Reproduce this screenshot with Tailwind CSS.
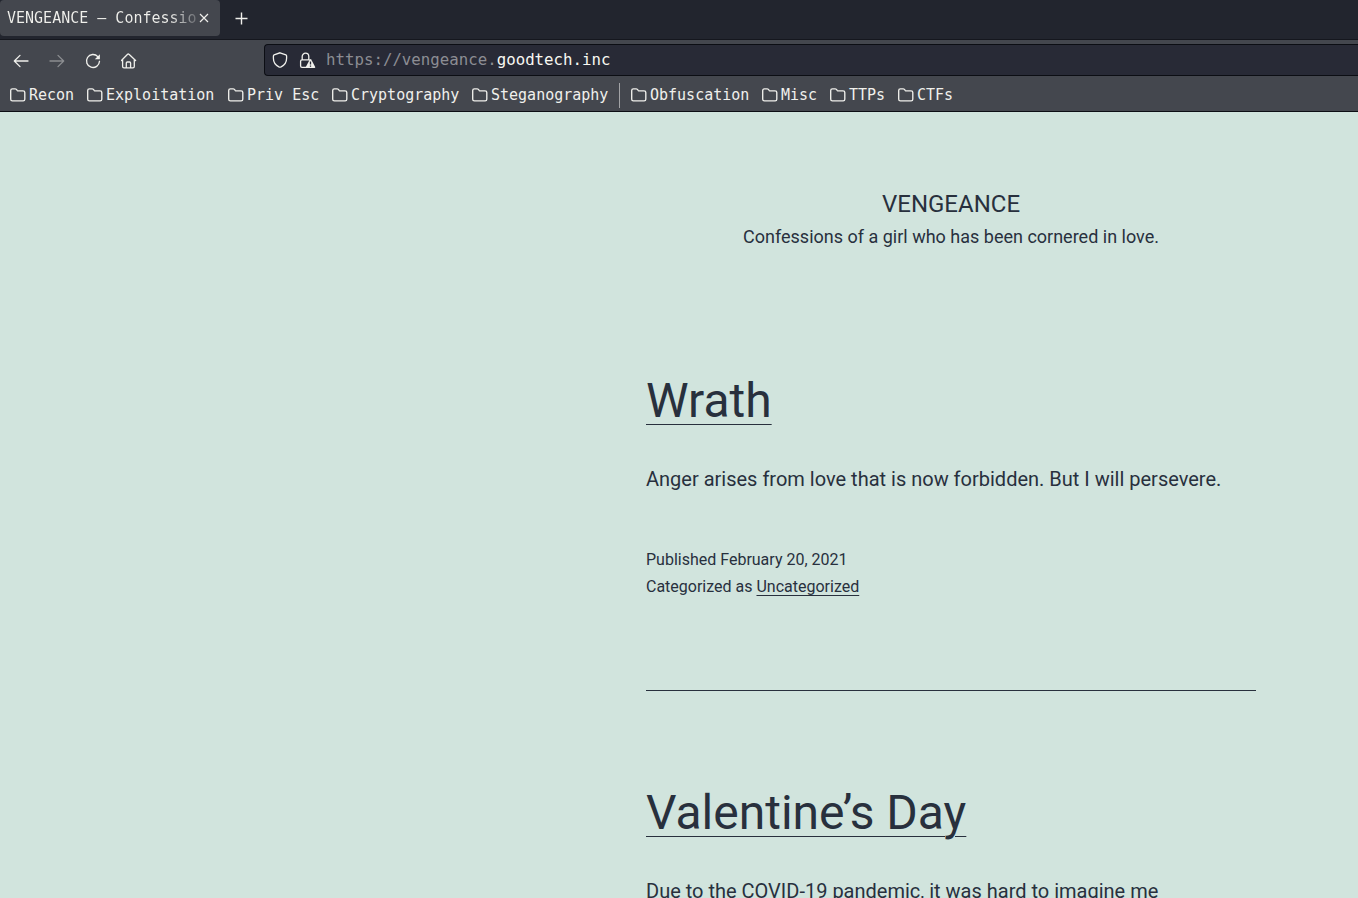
<!DOCTYPE html>
<html lang="en">
<head>
<meta charset="utf-8">
<title>VENGEANCE – Confessions</title>
<script src="https://cdn.jsdelivr.net/npm/@tailwindcss/browser@4"></script>
</head>
<body class="h-[898px] w-[1358px] overflow-hidden bg-[#d1e4dd] font-['Roboto',sans-serif] text-[#28303d]">
<svg class="hidden">
  <symbol id="folder" viewBox="0 0 16 14"><path d="M.7 11.2V2.5Q.7.8 2.4.8h2.7q.8 0 1.3.6l.8 1q.4.4 1.1.4h4.8q1.7 0 1.7 1.6v6.8q0 1.6-1.7 1.6H2.4Q.7 12.8.7 11.2z" fill="none" stroke="#f0f0ec" stroke-width="1.35"/></symbol>
</svg>
<header class="flex h-[112px] flex-col border-b border-[#0c0e14] bg-[#44474e] font-['DejaVu_Sans_Mono',monospace] text-[15px] text-[#f0f0ec]">
  <div class="flex h-10 shrink-0 items-start border-b border-[#15171e] bg-[#22252e]">
    <div class="flex h-9 w-[220px] items-center rounded bg-[#44474e] pl-[7px]">
      <span class="w-[189px] overflow-hidden whitespace-pre bg-linear-to-r from-[#f0f0ec] from-86% to-[#44474e] to-105% bg-clip-text pt-px text-transparent">VENGEANCE – Confessio</span>
      <svg class="ml-[3px]" width="10" height="10" viewBox="0 0 10 10"><path d="M1 1l8 8M9 1L1 9" stroke="#f0f0ec" stroke-width="1.15"/></svg>
    </div>
    <svg class="mt-3 ml-[15px]" width="13" height="13" viewBox="0 0 13 13"><path d="M6.5.5v12M.5 6.5h12" stroke="#f0f0ec" stroke-width="1.4"/></svg>
  </div>
  <div class="flex h-10 shrink-0 items-center">
    <div class="flex w-[264px] items-center gap-5 pt-px pl-[13px]">
      <svg width="16" height="16" viewBox="0 0 16 16"><path d="M15 8H1.5M7 2.4L1.3 8 7 13.6" fill="none" stroke="#f0f0ec" stroke-width="1.3" stroke-linecap="round" stroke-linejoin="round"/></svg>
      <svg width="16" height="16" viewBox="0 0 16 16"><path d="M1 8h13.5M9 2.4L14.7 8 9 13.6" fill="none" stroke="#8b8d90" stroke-width="1.3" stroke-linecap="round" stroke-linejoin="round"/></svg>
      <svg width="16" height="16" viewBox="0 0 16 16"><path d="M12.8 3.6A6.5 6.5 0 1 0 14.5 8.3" fill="none" stroke="#f0f0ec" stroke-width="1.35" stroke-linecap="round"/><path d="M14.9 1.3v4.5q0 .5-.5.5H9.8z" fill="#f0f0ec"/></svg>
      <svg width="16" height="16" viewBox="0.4 0 16 16"><path d="M.8 7.5L7 1.3q.7-.7 1.4 0L15 7.5M2 6.8v6.6q0 1.4 1.4 1.4h8.9q1.4 0 1.4-1.4V6.8M5.7 14.6V10q0-1 1-1H9q1 0 1 1v4.6" fill="none" stroke="#f0f0ec" stroke-width="1.3" stroke-linecap="round"/></svg>
    </div>
    <div class="flex h-8 flex-1 items-center rounded-l border border-r-0 border-[#0c0e14] bg-[#282a36] pl-[7px]">
      <svg width="16" height="16" viewBox="0 0 16 16"><path d="M8 .8l5.9 2.1q.7.3.7 1v2.3q0 5.8-5.5 8.7-1.1.5-2.2 0-5.5-2.9-5.5-8.7V3.9q0-.7.7-1z" fill="none" stroke="#f0f0ec" stroke-width="1.3"/></svg>
      <svg class="ml-[11px]" width="17" height="17" viewBox="0 0 17 17"><path d="M8 15.4H3q-1.4 0-1.4-1.4V9.2Q1.6 7.8 3 7.8h7q1 0 1 1M3.2 7.7V4.5a3.3 3.3 0 0 1 6.6 0v3.2" fill="none" stroke="#f0f0ec" stroke-width="1.3"/><path d="M10.8 7.6q.7-1 1.4 0l4 7.3q.4 1.1-.7 1.1h-8q-1.1 0-.7-1.1z" fill="#f0f0ec"/><path d="M11.5 9.5v3M11.5 13.6v1.2" stroke="#282a36" stroke-width="1.3"/></svg>
      <span class="ml-[10px] text-[15.75px] text-[#8c8d93]">https://vengeance.<span class="text-[#f8f8f2]">goodtech.inc</span></span>
    </div>
  </div>
  <nav class="flex flex-1 items-center pl-[10px] leading-[30px] [&_svg]:mr-[3px] [&_svg]:shrink-0 [&>span]:flex [&>span]:items-center [&>span]:pb-px [&>span]:whitespace-pre">
    <span class="w-[77px]"><svg width="16" height="14"><use href="#folder"/></svg>Recon</span>
    <span class="w-[141px]"><svg width="16" height="14"><use href="#folder"/></svg>Exploitation</span>
    <span class="w-[104px]"><svg width="16" height="14"><use href="#folder"/></svg>Priv Esc</span>
    <span class="w-[140px]"><svg width="16" height="14"><use href="#folder"/></svg>Cryptography</span>
    <span class="w-[147px]"><svg width="16" height="14"><use href="#folder"/></svg>Steganography</span>
    <i class="mr-[11px] h-[25px] w-px bg-[#a2a3a6]"></i>
    <span class="w-[131px]"><svg width="16" height="14"><use href="#folder"/></svg>Obfuscation</span>
    <span class="w-[68px]"><svg width="16" height="14"><use href="#folder"/></svg>Misc</span>
    <span class="w-[68px]"><svg width="16" height="14"><use href="#folder"/></svg>TTPs</span>
    <span><svg width="16" height="14"><use href="#folder"/></svg>CTFs</span>
  </nav>
</header>
<main class="ml-[646px] w-[610px] pt-[72px]">
  <div class="text-center">
    <h1 class="text-[24px] leading-10">VENGEANCE</h1>
    <p class="text-[18px] leading-[26px]">Confessions of a girl who has been cornered in love.</p>
  </div>
  <article class="mt-[120px]">
    <h2 class="text-[48px] leading-[62px]"><a class="underline decoration-1 underline-offset-[7px]">Wrath</a></h2>
    <p class="mt-[30px] text-[20px] leading-[34px]">Anger arises from love that is now forbidden. But I will persevere.</p>
    <div class="mt-[50px] text-[16px] leading-[27px]">
      <p>Published February 20, 2021</p>
      <p>Categorized as <a class="underline decoration-1 underline-offset-[3px]">Uncategorized</a></p>
    </div>
  </article>
  <hr class="mt-[90px] border-t border-[#28303d]">
  <article class="mt-[91px]">
    <h2 class="text-[48px] leading-[62px]"><a class="underline decoration-1 underline-offset-[7px]">Valentine’s Day</a></h2>
    <p class="mt-[30px] text-[20px] leading-[34px]">Due to the COVID-19 pandemic, it was hard to imagine me</p>
  </article>
</main>
</body>
</html>
